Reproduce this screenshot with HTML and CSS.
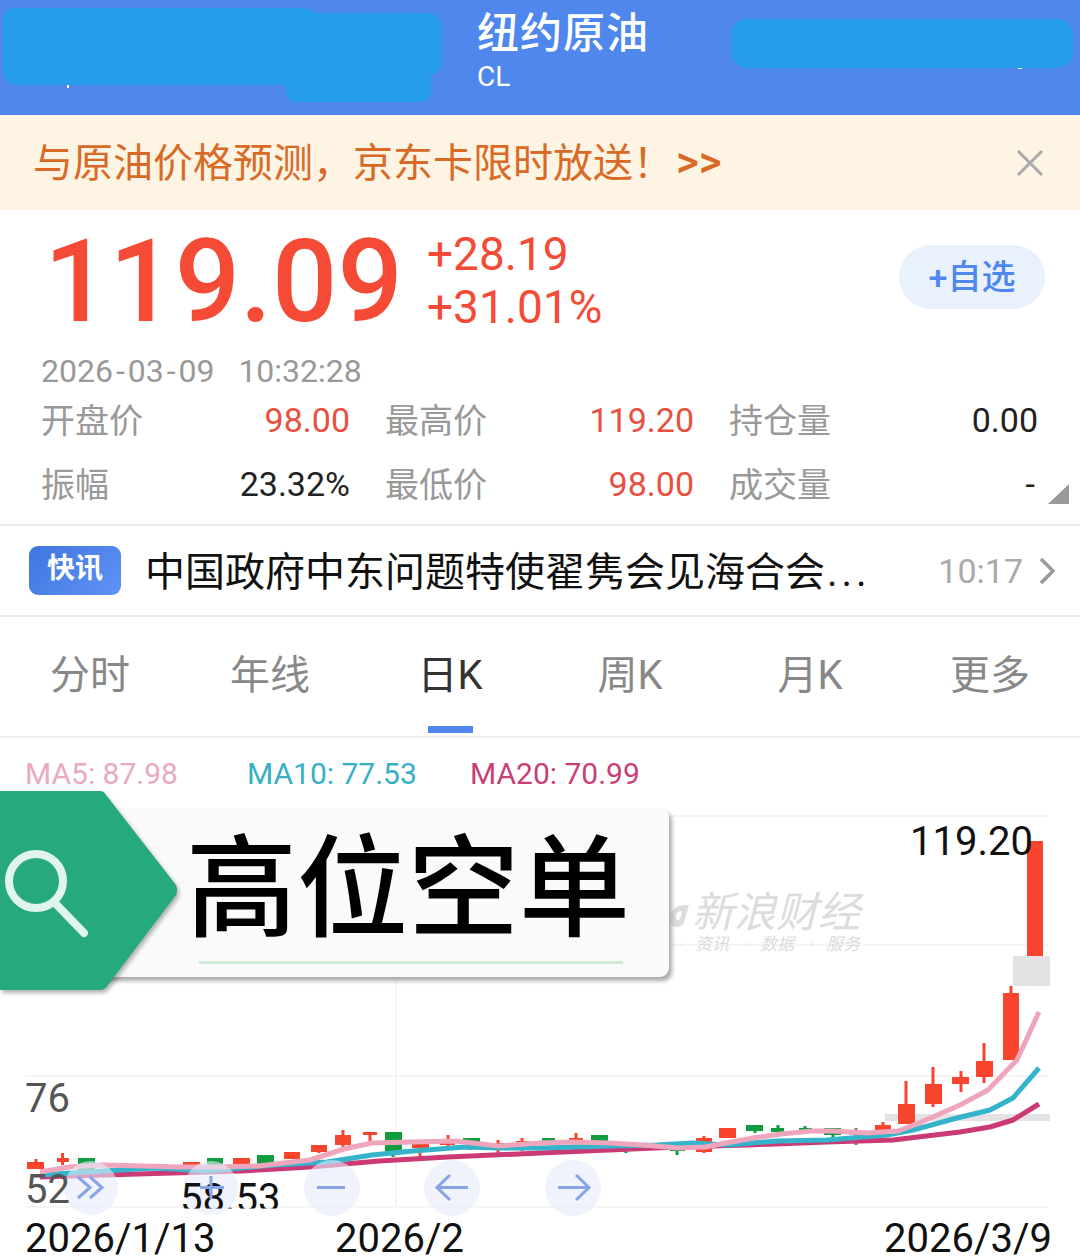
FILE: index.html
```html
<!DOCTYPE html>
<html lang="zh-CN">
<head>
    <meta charset="UTF-8">
    <meta name="viewport" content="width=device-width, initial-scale=1.0">
    <title>纽约原油</title>
    <link rel="stylesheet" href="styles.css">
</head>
<body>
    <header class="top-bar">
        <svg class="top-blobs" width="1080" height="115" viewBox="0 0 1080 115">
            <path class="speck" d="M67 82h2v6h-2zM419 63h5v4h-5zM800 66h22v2h-22zM1018 66h4v3h-4zM1036 66h8v2h-8z"/>
            <path class="blob" d="M14 8H300Q310 8 316 13H425Q442 13 442 30V62Q442 72 431 76V90Q431 102 418 102H298Q286 102 286 90V85H20Q3 85 3 68V22Q3 8 14 8Z"/>
            <rect class="blob" x="731" y="19" width="342" height="49" rx="16"/>
        </svg>
        <div class="top-title">
            <h1>纽约原油</h1>
            <span>CL</span>
        </div>
    </header>

    <div class="notice">
        <span class="notice-text">与原油价格预测，京东卡限时放送！<b>&gt;&gt;</b></span>
        <svg class="notice-close" width="28" height="28" viewBox="0 0 28 28">
            <path d="M2 2L26 26M26 2L2 26"/>
        </svg>
    </div>

    <section class="quote">
        <div class="quote-head">
            <div class="price">119.09</div>
            <div class="change">
                <div>+28.19</div>
                <div>+31.01%</div>
            </div>
            <button class="add-btn">+自选</button>
        </div>
        <div class="quote-time">2026<span class="dash">-</span>03<span class="dash">-</span>09&nbsp;&nbsp;&nbsp;10:32:28</div>
        <div class="stats">
            <div class="stat"><label>开盘价</label><span class="red">98.00</span></div>
            <div class="stat"><label>最高价</label><span class="red">119.20</span></div>
            <div class="stat"><label>持仓量</label><span>0.00</span></div>
            <div class="stat"><label>振幅</label><span>23.32%</span></div>
            <div class="stat"><label>最低价</label><span class="red">98.00</span></div>
            <div class="stat"><label>成交量</label><span class="dash">-</span></div>
        </div>
        <i class="corner"></i>
    </section>

    <div class="news">
        <span class="news-tag">快讯</span>
        <span class="news-text">中国政府中东问题特使翟隽会见海合会<span class="dots">...</span></span>
        <span class="news-time">10:17</span>
        <svg class="news-arrow" width="18" height="28" viewBox="0 0 18 28">
            <path d="M3 2L15 14L3 26"/>
        </svg>
    </div>

    <nav class="tabs">
        <a>分时</a>
        <a>年线</a>
        <a class="active">日K</a>
        <a>周K</a>
        <a>月K</a>
        <a>更多</a>
    </nav>

    <section class="chart">
        <div class="legend">
            <span class="ma5">MA5: 87.98</span>
            <span class="ma10">MA10: 77.53</span>
            <span class="ma20">MA20: 70.99</span>
        </div>

        <svg class="kline" width="1080" height="451" viewBox="0 808 1080 451">
            <defs>
                <clipPath id="plot"><rect x="0" y="808" width="1080" height="400.5"/></clipPath>
            </defs>

            <!-- grid -->
            <path class="grid" d="M25 816H1048M25 945H1048M25 1076H1048M25 1207H1048M396 816V1207"/>

            <!-- watermark -->
            <path class="wm-logo" fill-rule="evenodd" d="M670 916Q673 905 686 905H689L684 922Q683 927 676 927Q668 926 670 916ZM676 915Q675 920 678 920Q680 920 681 916L682 911Q677 911 676 915Z"/>
            <text class="wm-main" x="692" y="927">新浪财经</text>
            <text class="wm-sub" y="950"><tspan x="678">·</tspan><tspan x="695">资讯</tspan><tspan x="744">·</tspan><tspan x="760">数据</tspan><tspan x="810">·</tspan><tspan x="826">服务</tspan></text>

            <!-- limit bands -->
            <rect class="band" x="1013" y="956" width="37" height="30"/>
            <rect class="band" x="885" y="1114" width="165" height="7"/>

            <!-- candles, rising -->
            <g class="up">
                <path class="wick" d="M36 1159V1168M62.5 1153V1165M319 1151V1153M343 1130V1147M370 1134V1143M420 1148V1158M448 1135V1147M498 1140V1153M522 1138V1151M576 1133V1140M704 1136V1153M883 1122V1132M906 1081V1124M933 1067V1107M961 1071V1092M984 1043V1083M1011 986V1060"/>
                <rect x="27" y="1162" width="17" height="7"/>
                <rect x="57" y="1158" width="12" height="4"/>
                <rect x="183" y="1162" width="17" height="5"/>
                <rect x="233" y="1158" width="17" height="9"/>
                <rect x="284" y="1152" width="16" height="7"/>
                <rect x="311" y="1145" width="16" height="7"/>
                <rect x="335" y="1135" width="16" height="10"/>
                <rect x="363" y="1132" width="14" height="3"/>
                <rect x="412" y="1144" width="17" height="4"/>
                <rect x="440" y="1141" width="15" height="4"/>
                <rect x="492" y="1143" width="13" height="3"/>
                <rect x="516" y="1141" width="13" height="3"/>
                <rect x="569" y="1138" width="14" height="3"/>
                <rect x="696" y="1138" width="16" height="14"/>
                <rect x="719" y="1128" width="17" height="10"/>
                <rect x="875" y="1125" width="16" height="7"/>
                <rect x="898" y="1104" width="17" height="20"/>
                <rect x="925" y="1084" width="17" height="20"/>
                <rect x="952" y="1077" width="17" height="7"/>
                <rect x="976" y="1061" width="17" height="16"/>
                <rect x="1003" y="993" width="16" height="67"/>
                <rect x="1027" y="841" width="16" height="115"/>
            </g>

            <!-- candles, falling -->
            <g class="down">
                <path class="wick" d="M214 1166V1172M393 1150V1157M471 1142V1150M626 1150V1153M677 1150V1155M755 1130V1133M778 1125V1135M805 1126V1133M833 1134V1137"/>
                <rect x="78" y="1158" width="17" height="12"/>
                <rect x="207" y="1158" width="16" height="9"/>
                <rect x="257" y="1155" width="17" height="10"/>
                <rect x="385" y="1132" width="17" height="20"/>
                <rect x="463" y="1138" width="17" height="5"/>
                <rect x="542" y="1138" width="13" height="4"/>
                <rect x="591" y="1135" width="17" height="13"/>
                <rect x="670" y="1150" width="15" height="1"/>
                <rect x="746" y="1125" width="17" height="6"/>
                <rect x="771" y="1128" width="13" height="4"/>
                <rect x="799" y="1128" width="13" height="3"/>
                <rect x="824" y="1128" width="17" height="7"/>
                <path class="wick flat" d="M856 1128V1145M849 1133H862"/>
            </g>

            <!-- moving averages -->
            <polyline class="ma-line ma20" points="40,1177 138,1174 241,1171 310,1167 379,1161 448,1157 540,1153 609,1150 678,1147 747,1145 827,1142 893,1140 960,1132 990,1127 1013,1120 1039,1104"/>
            <polyline class="ma-line ma10" points="40,1175 86,1172 155,1168 207,1171 275,1165 327,1162 372,1155 413,1151 465,1147 499,1148 540,1148 610,1146 657,1145 693,1143 727,1145 777,1141 827,1140 887,1135 913,1130 957,1118 990,1110 1013,1098 1039,1068"/>
            <polyline class="ma-line ma5" points="40,1172 69,1167 103,1165 145,1166 179,1167 213,1167 258,1166 310,1160 344,1149 372,1143 413,1142 455,1141 499,1146 540,1143 574,1142 609,1143 643,1145 678,1148 705,1147 726,1143 753,1138 781,1134 812,1131 833,1131 867,1133 898,1131 919,1123 960,1105 988,1090 1017,1060 1039,1012"/>

            <!-- zoom and pan buttons -->
            <circle class="pan-bg" cx="91" cy="1188" r="27"/>
            <circle class="pan-bg" cx="211" cy="1188" r="27"/>
            <circle class="pan-bg" cx="332" cy="1188" r="28"/>
            <circle class="pan-bg" cx="452" cy="1188" r="28"/>
            <circle class="pan-bg" cx="573" cy="1188" r="28"/>

            <!-- axis labels -->
            <text class="axis grey" x="25" y="1112">76</text>
            <text class="axis grey" x="25" y="1203">52</text>
            <text class="axis" x="910" y="855">119.20</text>
            <text class="axis" clip-path="url(#plot)" x="180" y="1212">58.53</text>
            <text class="axis" x="25" y="1252">2026/1/13</text>
            <text class="axis" x="335" y="1252">2026/2</text>
            <text class="axis" x="884" y="1252">2026/3/9</text>

            <path class="pan-icon" d="M78 1177L90 1187.5L78 1198M90 1177L102 1187.5L90 1198"/>
            <path class="pan-icon" d="M200 1187.5H224M211 1176V1199"/>
            <path class="pan-icon" d="M317 1187.5H345"/>
            <path class="pan-icon" d="M438 1187.5H468M450 1175L437 1187.5L450 1200"/>
            <path class="pan-icon" d="M558 1187.5H589M576 1175L589 1187.5L576 1200"/>
        </svg>

        <div class="banner">
            <div class="banner-card">
                <strong>高位空单</strong>
                <div class="banner-rule"></div>
            </div>
            <svg class="banner-flag" width="180" height="204" viewBox="0 0 180 204">
                <path class="flag-bg" d="M0 0H100Q104 0 106 4L176 94Q178 99 176 104L108 194Q105 199 100 199H0Z"/>
                <circle class="flag-icon" cx="36" cy="90" r="27"/>
                <path class="flag-icon" d="M55 112L84 142"/>
            </svg>
        </div>
    </section>
</body>
</html>
```

FILE: styles.css
```css
* { box-sizing: border-box; }
html, body { margin: 0; padding: 0; }
body { width: 1080px; height: 1259px; overflow: hidden; background: #fff;
       font-family: Roboto, "Noto Sans CJK SC", sans-serif; color: #222; }

/* top bar */
.top-bar { height: 115px; background: #4f87ec; position: relative; padding: 9px 0 0 477px; }
.top-blobs { position: absolute; left: 0; top: 0; }
.blob { fill: #259deb; }
.speck { fill: #fff; }
.top-title { position: relative; color: #fff; }
.top-title h1 { margin: 0; font-size: 42px; line-height: 50px; font-weight: 500; letter-spacing: 1px; }
.top-title span { display: block; font-size: 28px; line-height: 35px; }

/* notice strip */
.notice { height: 95px; background: #fdf4e3; color: #d96a26; font-size: 40px; padding: 0 36px 0 33px;
          display: flex; align-items: center; justify-content: space-between; }
.notice-text { margin-bottom: 6px; white-space: nowrap; }
.notice b { font-weight: 500; margin-left: 3px; font-size: 44px; }
.notice-close path { stroke: #aaa; stroke-width: 3; fill: none; }

/* price block */
.quote { height: 314px; padding: 0 41px; position: relative; }
.quote-head { display: flex; align-items: flex-start; height: 138px; }
.price { font-size: 115px; line-height: 136px; color: #f44a36; font-weight: 500; width: 383px; margin: 4px 0 0 3px; }
.change { font-size: 46px; line-height: 53px; color: #f44a36; padding-top: 18px; }
.add-btn { margin: 35px -6px 0 auto; width: 146px; height: 64px; padding: 0 0 5px; border: 0; border-radius: 32px;
           background: #e8f1fc; color: #4f87ec; font: 500 34px Roboto, "Noto Sans CJK SC", sans-serif; }
.quote-time { font-size: 32px; line-height: 44px; color: #999; margin-top: 1px; }
.dash { padding: 0 3px; }
.stats { display: grid; grid-template-columns: repeat(3, 309px); column-gap: 35px; margin-top: -7px; }
.stat { display: flex; justify-content: space-between; align-items: center; height: 64px; font-size: 34px; }
.stat label { color: #999; }
.stat span { padding-top: 4px; }
.stat .red { color: #e8503f; }
.corner { position: absolute; right: 11px; bottom: 20px; width: 0; height: 0;
          border-left: 21px solid transparent; border-bottom: 20px solid #999; }

/* news line */
.news { height: 93px; border-top: 2px solid #ececec; border-bottom: 2px solid #ececec; padding: 0 24px 0 29px;
        display: flex; align-items: center; }
.news-tag { width: 92px; height: 49px; line-height: 46px; text-align: center; border-radius: 9px;
            background: linear-gradient(135deg, #3f76df, #6092f6); color: #fff; font-size: 28px; font-weight: 700; }
.news-text { margin: 0 auto 4px 24px; font-size: 40px; color: #111; white-space: nowrap; }
.dots { letter-spacing: 4px; margin-left: 2px; }
.news-time { font-size: 34px; color: #aaa; }
.news-arrow { margin-left: 15px; }
.news-arrow path { stroke: #999; stroke-width: 3.5; fill: none; }

/* period tabs */
.tabs { height: 121px; display: grid; grid-template-columns: repeat(6, 180px); border-bottom: 2px solid #eef0f4; }
.tabs a { position: relative; text-align: center; font-size: 40px; line-height: 117px; color: #888; }
.tabs a.active { color: #333; }
.tabs a.active::after { content: ""; position: absolute; left: 68px; bottom: 3px; width: 45px; height: 7px; background: #4f87ec; }

/* chart */
.chart { position: relative; height: 521px; }
.legend { height: 70px; font-size: 30px; line-height: 72px; white-space: nowrap; padding-left: 25px; display: flex; }
.legend .ma5 { color: #e9a9bf; width: 222px; }
.legend .ma10 { color: #35b0c5; width: 223px; }
.legend .ma20 { color: #c83f78; }
.kline { display: block; }
.grid { stroke: #f5f5f5; stroke-width: 2; fill: none; }
.band { fill: #e3e3e5; }
.up { fill: #f9452d; stroke: none; }
.down { fill: #0f9d3f; }
.wick { stroke: #f9452d; stroke-width: 3; fill: none; }
.down .wick { stroke: #0f9d3f; }
.down .wick.flat { stroke: #7a7a7a; }
.ma-line { fill: none; stroke-width: 5; stroke-linejoin: round; }
.ma-line.ma5 { stroke: #efa6bd; }
.ma-line.ma10 { stroke: #35b3ca; }
.ma-line.ma20 { stroke: #cc3a76; }
.axis { font-size: 40px; fill: #111; }
.axis.grey { fill: #555; }
.wm-main { font-size: 42px; font-style: italic; fill: #dcdcdc; }
.wm-sub { font-size: 17px; font-style: italic; fill: #dcdcdc; }
.wm-logo { fill: #dcdcdc; }
.pan-bg { fill: #e6ebf8; fill-opacity: .6; }
.pan-icon { fill: none; stroke: #86a4e6; stroke-width: 3; }

/* overlay banner */
.banner { position: absolute; left: 0; top: 53px; width: 669px; height: 200px; }
.banner-card { position: absolute; left: 90px; right: 0; top: 17px; height: 169px; background: #fafafb;
               border-radius: 9px; box-shadow: 3px 4px 4px #aaa; padding-left: 96px; }
.banner-card strong { display: block; font-size: 111px; line-height: 164px; height: 153px; font-weight: 500; color: #000;
                      white-space: nowrap; }
.banner-rule { width: 424px; height: 3px; margin-left: 13px; background: #cfe8d6; }
.banner-flag { position: absolute; left: 0; top: 0; filter: drop-shadow(2px 3px 2px rgba(0,0,0,.3)); }
.flag-bg { fill: #27a980; }
.flag-icon { fill: none; stroke: #dff5ee; stroke-width: 8; stroke-linecap: round; }
```
